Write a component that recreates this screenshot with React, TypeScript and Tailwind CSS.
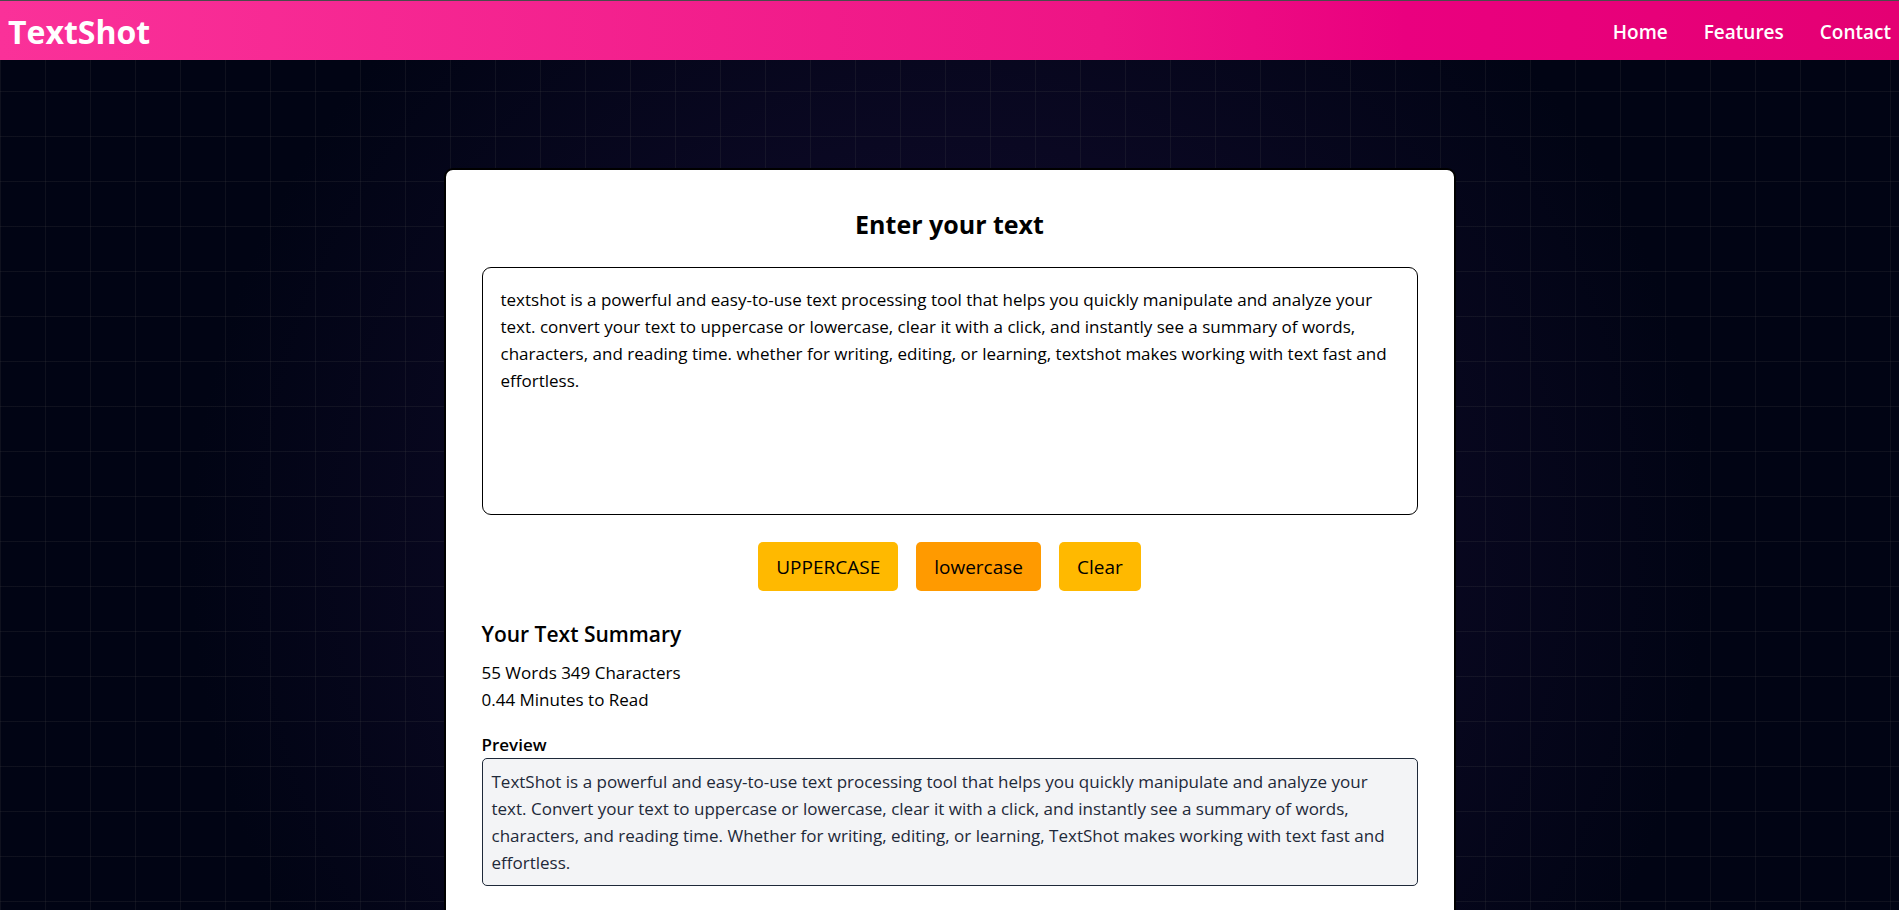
import { useState } from "react";

const SAMPLE =
  "TextShot is a powerful and easy-to-use text processing tool that helps you quickly manipulate and analyze your text. Convert your text to uppercase or lowercase, clear it with a click, and instantly see a summary of words, characters, and reading time. Whether for writing, editing, or learning, TextShot makes working with text fast and effortless.";

const links = ["Home", "Features", "Contact"];

function Navbar() {
  return (
    <nav className="flex h-[60px] items-center justify-between border-t border-[#4b4b4b] bg-linear-[90deg,#fa3199,#ee1485_58%,#ea007f_74%,#e40073] px-2 pt-[3px] text-white">
      <a href="#home" className="text-[32px] leading-10 font-bold">
        TextShot
      </a>
      <ul className="flex gap-9 text-[19px] font-semibold">
        {links.map((link) => (
          <li key={link}>
            <a href={`#${link.toLowerCase()}`}>{link}</a>
          </li>
        ))}
      </ul>
    </nav>
  );
}

export default function App() {
  const [text, setText] = useState(SAMPLE.toLowerCase());
  const button = "rounded-[5px] px-[18px] pt-[10px] pb-[8px] text-[19px] leading-[31px] text-black";

  return (
    <div className="min-h-screen bg-[#010414] bg-[linear-gradient(to_right,#4f4f4f2e_1px,transparent_1px),linear-gradient(to_bottom,#4f4f4f2e_1px,transparent_1px),radial-gradient(circle_760px_at_50%_555px,#150d33,#010414)] bg-[size:45px_45px,45px_45px,100%_100%] bg-[position:0_1px,0_1px,0_0] pb-[108px] font-['Open_Sans','Noto_Sans',sans-serif] text-black">
      <Navbar />
      <main className="mx-auto mt-[108px] w-full max-w-[1012px] rounded-[9px] border-2 border-black bg-white p-9">
        <h1 className="mb-[25px] text-center text-[25px] leading-9 font-bold">
          <label htmlFor="text">Enter your text</label>
        </h1>
        <textarea
          id="text"
          value={text}
          onChange={(e) => setText(e.target.value)}
          className="block h-[248px] w-full resize-none rounded-[9px] border border-black p-[18px] text-[17px] leading-[27px]"
        />
        <div className="mt-[27px] flex justify-center gap-[18px]">
          <button className={`${button} bg-[#ffb900]`} onClick={() => setText(text.toUpperCase())}>
            UPPERCASE
          </button>
          <button className={`${button} bg-[#ff9a00]`} onClick={() => setText(text.toLowerCase())}>
            lowercase
          </button>
          <button className={`${button} bg-[#ffb900]`} onClick={() => setText("")}>
            Clear
          </button>
        </div>
        <section className="mt-[27px] text-[17px] leading-[27px]">
          <h2 className="mb-[9px] text-[21px] leading-8 font-semibold">Your Text Summary</h2>
          <p>55 Words 349 Characters</p>
          <p>0.44 Minutes to Read</p>
          <h3 className="mt-[18px] font-semibold">Preview</h3>
          <p className="rounded-[5px] border border-[#1e2939] bg-[#f3f4f6] py-[9px] pr-[18px] pl-[9px] text-[#1e2939]">
            {SAMPLE}
          </p>
        </section>
      </main>
    </div>
  );
}
